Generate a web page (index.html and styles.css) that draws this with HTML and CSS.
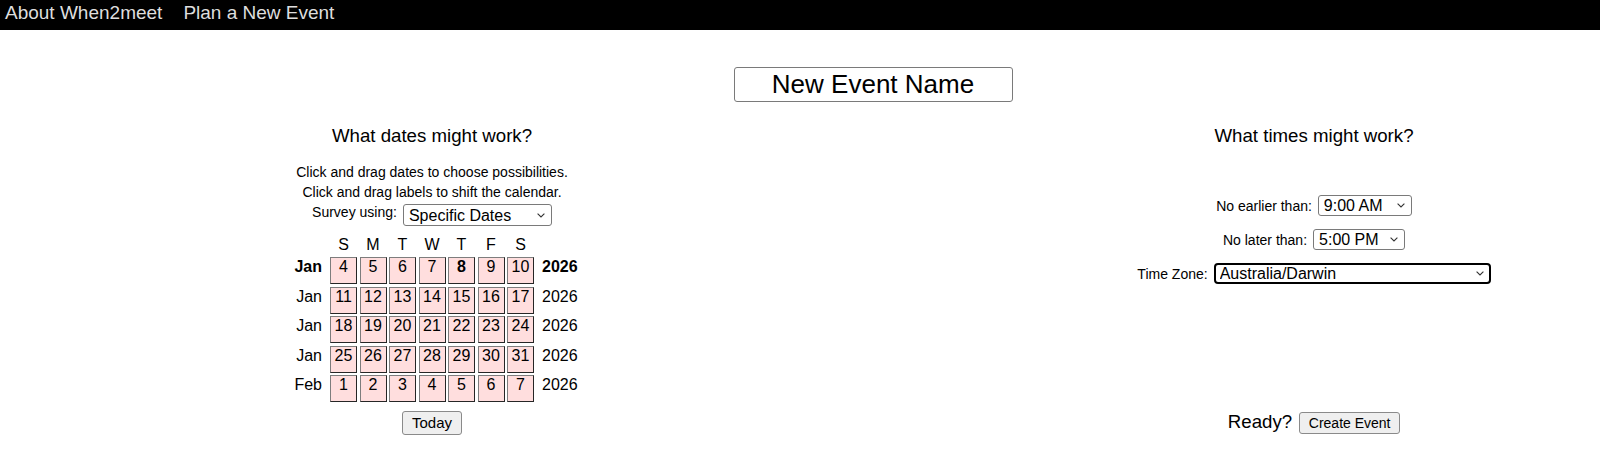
FILE: index.html
```html
<!DOCTYPE html>
<html lang="en">
<head>
<meta charset="utf-8">
<title>When2meet</title>
<link rel="stylesheet" href="styles.css">
</head>
<body>
<div class="topbar">
  <a class="navlink" href="#">About When2meet</a>
  <a class="navlink" href="#">Plan a New Event</a>
</div>
<form class="page">
  <div class="name-row">
    <input class="event-name" type="text" value="New Event Name">
  </div>
  <div class="columns">
    <section class="col">
      <h2 class="col-title">What dates might work?</h2>
      <p class="hint">Click and drag dates to choose possibilities.<br>Click and drag labels to shift the calendar.</p>
      <div class="field-row survey-row">
        <label class="field-label">Survey using:</label>
        <span class="select-wrap">
          <select class="sel sel-survey">
            <option selected>Specific Dates</option>
            <option>Days of the Week</option>
          </select>
          <svg class="chev" viewBox="0 0 8 5"><polyline points="0.6,0.6 4,4 7.4,0.6"/></svg>
        </span>
      </div>
      <div class="cal">
        <div></div>
        <div class="dow">S</div><div class="dow">M</div><div class="dow">T</div><div class="dow">W</div><div class="dow">T</div><div class="dow">F</div><div class="dow">S</div>
        <div></div>

        <div class="mon bold">Jan</div>
        <div class="day">4</div><div class="day">5</div><div class="day">6</div><div class="day">7</div><div class="day bold">8</div><div class="day">9</div><div class="day">10</div>
        <div class="yr bold">2026</div>

        <div class="mon">Jan</div>
        <div class="day">11</div><div class="day">12</div><div class="day">13</div><div class="day">14</div><div class="day">15</div><div class="day">16</div><div class="day">17</div>
        <div class="yr">2026</div>

        <div class="mon">Jan</div>
        <div class="day">18</div><div class="day">19</div><div class="day">20</div><div class="day">21</div><div class="day">22</div><div class="day">23</div><div class="day">24</div>
        <div class="yr">2026</div>

        <div class="mon">Jan</div>
        <div class="day">25</div><div class="day">26</div><div class="day">27</div><div class="day">28</div><div class="day">29</div><div class="day">30</div><div class="day">31</div>
        <div class="yr">2026</div>

        <div class="mon">Feb</div>
        <div class="day">1</div><div class="day">2</div><div class="day">3</div><div class="day">4</div><div class="day">5</div><div class="day">6</div><div class="day">7</div>
        <div class="yr">2026</div>
      </div>
      <button class="btn btn-today" type="button">Today</button>
    </section>

    <section class="col">
      <h2 class="col-title">What times might work?</h2>
      <div class="time-rows">
        <div class="field-row">
          <label class="field-label">No earlier than:</label>
          <span class="select-wrap">
            <select class="sel sel-early">
              <option>8:00 AM</option>
              <option selected>9:00 AM</option>
              <option>10:00 AM</option>
            </select>
            <svg class="chev" viewBox="0 0 8 5"><polyline points="0.6,0.6 4,4 7.4,0.6"/></svg>
          </span>
        </div>
        <div class="field-row">
          <label class="field-label">No later than:</label>
          <span class="select-wrap">
            <select class="sel sel-late">
              <option>4:00 PM</option>
              <option selected>5:00 PM</option>
              <option>6:00 PM</option>
            </select>
            <svg class="chev" viewBox="0 0 8 5"><polyline points="0.6,0.6 4,4 7.4,0.6"/></svg>
          </span>
        </div>
        <div class="field-row">
          <label class="field-label">Time Zone:</label>
          <span class="select-wrap">
            <select class="sel sel-tz">
              <option>Australia/Brisbane</option>
              <option selected>Australia/Darwin</option>
              <option>Australia/Perth</option>
            </select>
            <svg class="chev" viewBox="0 0 8 5"><polyline points="0.6,0.6 4,4 7.4,0.6"/></svg>
          </span>
        </div>
      </div>
      <div class="ready-row">
        <span class="ready-label">Ready?</span>
        <button class="btn btn-create" type="button">Create Event</button>
      </div>
    </section>
  </div>
</form>
</body>
</html>
```
FILE: styles.css
```css
html, body {
  margin: 0;
  padding: 0;
  background: #fff;
}

body {
  font-family: "Liberation Sans", Arial, sans-serif;
  color: #000;
}

.topbar {
  height: 30px;
  background: #000;
  display: flex;
  align-items: flex-start;
  gap: 21px;
  padding-left: 5px;
}

.navlink {
  color: #dedede;
  text-decoration: none;
  font-size: 19px;
  line-height: 21px;
  padding-top: 2.2px;
}

.page {
  width: 1382px;
  margin: 0 0 0 182px;
  padding-top: 37px;
}

.name-row {
  display: flex;
  justify-content: center;
}

.event-name {
  box-sizing: border-box;
  width: 279px;
  height: 35px;
  margin: 0;
  padding: 0;
  border: 1px solid #7a7a7a;
  border-radius: 3px;
  font-family: "Liberation Sans", Arial, sans-serif;
  font-size: 26px;
  text-align: center;
  color: #000;
  background: #fff;
}

.columns {
  display: grid;
  grid-template-columns: 500px 500px;
  column-gap: 382px;
  margin-top: 23px;
}

.col {
  display: flex;
  flex-direction: column;
  align-items: center;
}

.col-title {
  margin: 0;
  font-size: 18.67px;
  font-weight: normal;
  line-height: 22px;
}

.hint {
  margin: 15px 0 0;
  font-size: 14px;
  line-height: 20px;
  text-align: center;
}

.field-row {
  display: flex;
  align-items: center;
  gap: 6px;
  font-size: 14px;
  line-height: 16px;
}

.survey-row {
  margin-top: 2px;
  align-items: flex-start;
}

.select-wrap {
  position: relative;
  display: block;
}

.sel {
  -webkit-appearance: none;
  appearance: none;
  box-sizing: border-box;
  display: block;
  margin: 0;
  padding: 0 0 0 5px;
  height: 21px;
  border: 1px solid #7a7a7a;
  border-radius: 3px;
  background: #fff;
  color: #000;
  font-family: "Liberation Sans", Arial, sans-serif;
  font-size: 16px;
  outline: none;
}

.sel-survey { width: 149px; height: 22px; }
.sel-early { width: 94px; }
.sel-late { width: 92px; }
.sel-tz {
  width: 277px;
  border: 2px solid #000;
  border-radius: 4px;
  padding-left: 4px;
}

.chev {
  position: absolute;
  right: 7px;
  top: 50%;
  width: 8px;
  height: 5px;
  margin-top: -2.5px;
  pointer-events: none;
  fill: none;
  stroke: #333;
  stroke-width: 1.1;
}

.cal {
  display: grid;
  grid-template-columns: 48px repeat(7, 27px) 48px;
  grid-template-rows: 19px repeat(5, 27px);
  gap: 2.5px;
  margin-top: 9.5px;
  font-size: 16px;
  line-height: 18px;
}

.dow {
  text-align: center;
}

.day {
  box-sizing: border-box;
  border: 1px solid;
  border-color: #7d7d7d #262626 #262626 #7d7d7d;
  background: #ffdede;
  text-align: center;
}

.mon {
  text-align: right;
  padding-right: 5.5px;
  padding-top: 1px;
}

.yr {
  text-align: left;
  padding-left: 5.5px;
  padding-top: 1px;
}

.bold {
  font-weight: bold;
}

.btn {
  box-sizing: border-box;
  margin: 0;
  padding: 0;
  border: 1px solid #8a8a8a;
  border-radius: 3px;
  background: #efefef;
  color: #000;
  font-family: "Liberation Sans", Arial, sans-serif;
  line-height: 16px;
  text-align: center;
}

.btn-today {
  margin-top: 9px;
  width: 60px;
  height: 24px;
  font-size: 15px;
}

.time-rows {
  display: flex;
  flex-direction: column;
  align-items: center;
  gap: 13px;
  margin-top: 48px;
}

.ready-row {
  margin-top: auto;
  margin-bottom: 1px;
  display: flex;
  align-items: baseline;
  gap: 7px;
}

.ready-label {
  font-size: 18.67px;
  line-height: 22px;
}

.btn-create {
  width: 101px;
  height: 22px;
  font-size: 14px;
}
```
